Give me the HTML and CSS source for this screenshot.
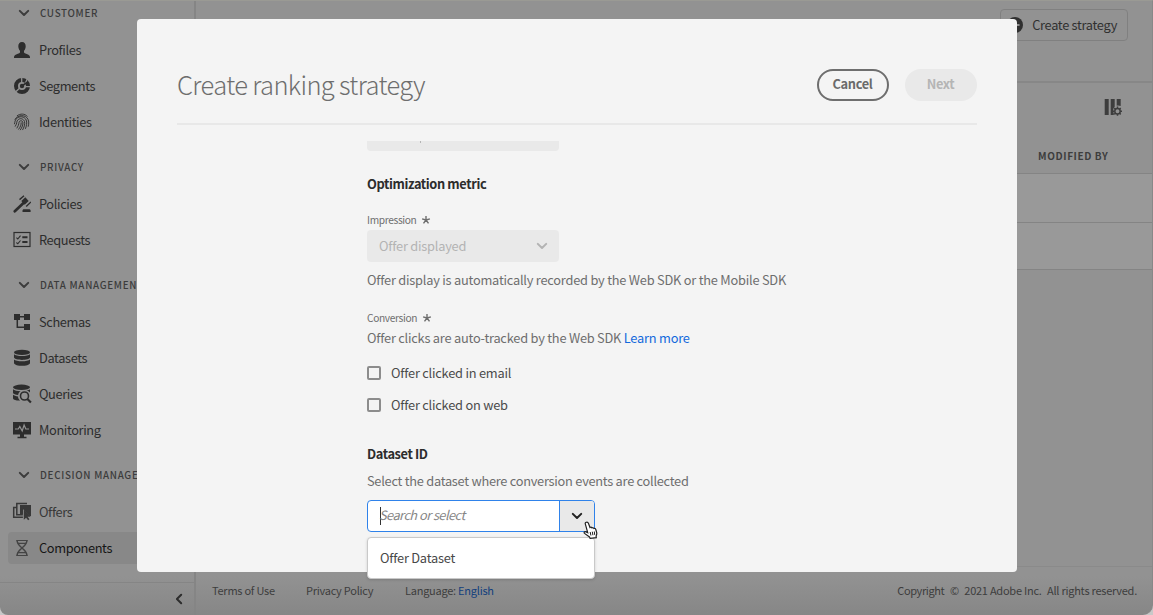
FILE: index.html
```
<!DOCTYPE html>
<html lang="en">
<head>
<meta charset="utf-8">
<title>Create ranking strategy</title>
<link rel="stylesheet" href="styles.css">
</head>
<body>
<svg class="defs" aria-hidden="true">
  <symbol id="chevron" viewBox="0 0 12 8"><path d="M1.8 1.9 6 6l4.2-4.1" fill="none" stroke="currentColor" stroke-width="2" stroke-linecap="round" stroke-linejoin="round"/></symbol>
  <symbol id="star" viewBox="0 0 10 10"><path d="M5 5V.9M5 5l3.9-1.2M5 5l2.5 3.4M5 5 2.5 8.4M5 5 1.1 3.8" fill="none" stroke="currentColor" stroke-width="1.4"/></symbol>
</svg>
<div class="app">
  <aside class="sidebar">
    <nav class="nav">
      <h2 class="group group-first"><svg class="chev"><use href="#chevron"/></svg>CUSTOMER</h2>
      <a class="item"><svg class="icon" viewBox="0 0 18 18"><path d="M9 1C6.500 1 5.300 2.800 5.300 5.300c0 1.900.7 3.500 1.700 4.500v1.400c0 .5-.2.800-.8 1C3.500 13 1 14 1 16v1h16v-1c0-2-2.500-3-5.200-3.800-.6-.2-.8-.5-.8-1V9.800c1-1 1.700-2.600 1.700-4.500C12.700 2.800 11.500 1 9 1z" fill="currentColor"/></svg>Profiles</a>
      <a class="item"><svg class="icon" viewBox="0 0 18 18"><circle cx="9" cy="9" r="6" fill="none" stroke="currentColor" stroke-width="4"/><path d="M8.700 6V0M12 6.800 14.500 1.500M11.500 9.700H18M6.200 11.500 2 15.500" stroke="#929292" stroke-width="1.300"/><circle cx="9" cy="9" r="2.200" fill="currentColor"/><path d="m9 9 5-3.600" stroke="currentColor" stroke-width="1.600"/></svg>Segments</a>
      <a class="item"><svg class="icon" viewBox="0 0 18 18"><g fill="none" stroke="currentColor" stroke-width=".9" stroke-linecap="round"><path d="M4.200 2.700C7.400.300 11.600.500 14.200 3.200M2 6.300C4.800 1.400 12.600 1.300 15 6.300c1 2.300.8 4.800.3 7M1.500 10.800C2 8.800 1.900 7.400 3.400 5.700 6.400 2.600 11.500 3.300 13.200 7c1 2.700.3 6-.7 8.500M2.300 13.300C4.700 9.800 2.800 8.600 5.300 6.500c2.600-1.800 5.400-.4 6.200 2 .7 2.800-.5 6.100-1.800 8.200M4 15c2.600-3.800 1.300-5.200 2.600-6.700 1.100-1 2.700-.6 3.200.8.600 2.300-.9 5.600-2.400 7.700M5.700 16.200c1.700-2.300 2.600-4.400 2.500-6.400"/></g></svg>Identities</a>
      <h2 class="group"><svg class="chev"><use href="#chevron"/></svg>PRIVACY</h2>
      <a class="item"><svg class="icon" viewBox="0 0 18 18"><g fill="none" stroke="currentColor"><path d="M1.800 16.200 10.500 8" stroke-width="2.700" stroke-linecap="round"/><path d="m10 7.800 4-3.600" stroke-width="5"/><path d="M6.500 4.600 11 .700M13.200 11.400 18 6.900" stroke-width="1.400"/></g><path d="M9.500 17v-1.300c0-1 .6-1.500 1.400-1.500h5.300c.8 0 1.400.5 1.400 1.500V17z" fill="currentColor"/></svg>Policies</a>
      <a class="item"><svg class="icon" viewBox="0 0 18 18"><g fill="none" stroke="currentColor"><rect x="1" y="1.500" width="16" height="14" stroke-width="1.200"/><path d="m3.400 6.700 1.400 1.300 2.700-3.300M3.400 11.500l1.400 1.300 2.700-3.300" stroke-width="1.100"/><path d="M9.300 6.200h5.200M9.300 11h5.200" stroke-width="1.900"/></g></svg>Requests</a>
      <h2 class="group"><svg class="chev"><use href="#chevron"/></svg>DATA MANAGEMENT</h2>
      <a class="item"><svg class="icon" viewBox="0 0 18 18"><path d="M1 1h6v6H1zM11 1h6v6h-6zM11 11h6v6h-6z" fill="currentColor"/><path d="M6 3.800h6M4.300 6v8.200H12" fill="none" stroke="currentColor" stroke-width="1.500"/></svg>Schemas</a>
      <a class="item"><svg class="icon" viewBox="0 0 18 18"><g fill="currentColor"><ellipse cx="9" cy="3.400" rx="8" ry="2.700"/><path d="M1 5.200C3 7.600 15 7.600 17 5.200v3.400c-1 3.200-15 3.200-16 0zM1 10.500c2 2.400 14 2.400 16 0v3.700c-1 3.400-15 3.400-16 0z"/></g></svg>Datasets</a>
      <a class="item"><svg class="icon icon-wide" viewBox="0 0 20 20"><g fill="currentColor"><ellipse cx="9.500" cy="3.300" rx="8.500" ry="2.700"/><path d="M1 5.300c1.400 1.400 4.500 1.800 7.500 1.900-1.500 1-2.200 2.200-2.400 3.700C3.500 10.700 1.500 10 1 9zM1 10.800c1 .9 3 1.400 5 1.600.1 1.700.8 3 2.200 4.100C4.800 16.700 1.500 16 1 14.500zM14.500 6.600c1.600-.3 2.800-.7 3.500-1.300v3.300c-1-1.100-2-1.700-3.500-2z"/></g><circle cx="12.500" cy="12" r="4" fill="none" stroke="currentColor" stroke-width="1.600"/><path d="m15.400 15 3.500 3.600" stroke="currentColor" stroke-width="2.200"/></svg>Queries</a>
      <a class="item"><svg class="icon icon-wide" viewBox="0 0 20 20"><path d="M1 2h18v12.500h-7v2.300h2.500v1.400h-9v-1.400H8v-2.300H1z" fill="currentColor"/><path d="M3 9h3.300l1.500-2.500 2.400 4.500L12.100 5l1.700 4H17" fill="none" stroke="#929292" stroke-width="1.200"/></svg>Monitoring</a>
      <h2 class="group"><svg class="chev"><use href="#chevron"/></svg>DECISION MANAGEMENT</h2>
      <a class="item item-dim"><svg class="icon icon-wide" viewBox="0 0 20 20"><path d="M8 3h11v11h-1.500l-6.500-7v5.500H8z" fill="currentColor"/><path d="M11.800 7.200v10.600l2.300-2.100 2 2.600 1.400-1-1.900-2.500h3z" fill="currentColor"/><path d="M15 1.500H4.800v11.200h6M4.500 5.500H1.700v9.700h9.200" fill="none" stroke="currentColor" stroke-width="1.500"/></svg>Offers</a>
      <a class="item item-active"><svg class="icon" viewBox="0 0 18 18"><g fill="none" stroke="currentColor" stroke-width="1.500"><path d="M4 1c0 8 10 8 10 16M14 1c0 8-10 8-10 16"/><path d="M3.600 1.500h10.800M4.800 4.400h8.400M4.800 13.600h8.400M3.600 16.500h10.800" stroke-width="1.100"/></g></svg>Components</a>
    </nav>
    <div class="collapse"><svg class="chev-left" viewBox="0 0 8 12"><path d="M6.200 1.800 1.900 6l4.300 4.200" fill="none" stroke="currentColor" stroke-width="2" stroke-linecap="round" stroke-linejoin="round"/></svg></div>
  </aside>
  <main class="main">
    <header class="topbar">
      <button class="create"><svg class="plus" viewBox="0 0 18 18"><circle cx="9" cy="9" r="8" fill="currentColor"/><path d="M9 4.500v9M4.500 9h9" stroke="#929292" stroke-width="2"/></svg>Create strategy</button>
    </header>
    <div class="tools"><svg class="columns" viewBox="0 0 18 18"><path d="M.700 1h4v16h-4zM6.700 1h4v7.800c-1 1-1.500 2-1.500 3.400 0 1.200.1 2.200.6 3.200V17H6.700zM12.700 1h4v7c-1.200-.7-2.800-.8-4-.3z" fill="currentColor"/><circle cx="13.500" cy="13.200" r="2.700" fill="none" stroke="currentColor" stroke-width="1.500"/><g stroke="currentColor" stroke-width="1.500"><path d="M13.500 8.600v1.700M13.500 16v1.800M8.900 13.200h1.700M16.400 13.200h1.700M10.300 10l1.100 1.100M15.600 15.300l1.100 1.100M16.700 10l-1.100 1.100M11.400 15.300l-1.100 1.100"/></g></svg></div>
    <div class="thead">MODIFIED BY</div>
    <div class="trow trow-tall"></div>
    <div class="trow"></div>
    <footer class="footer">
      <span class="terms">Terms of Use</span><span class="privacy">Privacy Policy</span><span class="lang">Language: <a class="lang-link">English</a></span>
      <span class="copy"><span class="copy-word">Copyright</span><span>©</span><span>2021 Adobe Inc.</span><span>All rights reserved.</span></span>
    </footer>
  </main>
</div>
<section class="modal">
  <header class="modal-head">
    <h1 class="title">Create ranking strategy</h1>
    <button class="btn btn-cancel">Cancel</button>
    <button class="btn btn-next">Next</button>
  </header>
  <div class="form">
    <div class="select-cut"></div>
    <h3 class="section">Optimization metric</h3>
    <label class="label">Impression<svg class="star"><use href="#star"/></svg></label>
    <div class="select">Offer displayed<svg class="chev"><use href="#chevron"/></svg></div>
    <p class="help help-sdk">Offer display is automatically recorded by the Web SDK or the Mobile SDK</p>
    <label class="label label-conversion">Conversion<svg class="star"><use href="#star"/></svg></label>
    <p class="help">Offer clicks are auto-tracked by the Web SDK <a class="link">Learn more</a></p>
    <div class="checks">
      <label class="check"><span class="box"></span>Offer clicked in email</label>
      <label class="check"><span class="box"></span>Offer clicked on web</label>
    </div>
    <h3 class="section section-dataset">Dataset ID</h3>
    <p class="help help-dataset">Select the dataset where conversion events are collected</p>
    <div class="combo">
      <div class="field"><span class="caret"></span><span class="placeholder">Search or select</span></div>
      <div class="toggle"><svg class="chev"><use href="#chevron"/></svg></div>
      <div class="menu">Offer Dataset</div>
      <svg class="pointer" viewBox="0 0 16 18"><path d="M4.300 1.300c1-.4 1.700.1 2.100 1L8 6.500c.8-.5 1.500-.3 2 .4.700-.4 1.500-.2 1.900.6.900-.3 1.600.1 1.900 1l.9 3.200c.3 1.300-.1 2.300-.6 3.400l.2 1.600-6.200.7-.6-1.500-5-3.500c-1-.9.2-2.300 1.600-1.500l1.600.8L3.300 2.900c-.3-.8.200-1.300 1-1.600z" fill="#fff" stroke="#222" stroke-width="1.200"/><path d="m8.200 11 .7 3.500M10.300 10.700l.6 3.500M12.300 10.500l.4 3.400" stroke="#222" stroke-width="1"/></svg>
    </div>
  </div>
</section>
</body>
</html>
```

FILE: styles.css
```
* { box-sizing: border-box; }
body {
  margin: 0;
  position: relative;
  width: 1153px;
  height: 615px;
  overflow: hidden;
  background: #c8c8c8;
  font-family: "Noto Sans CJK SC", "Noto Sans", sans-serif;
  font-size: 12.8px;
  letter-spacing: -0.22px;
  white-space: nowrap;
}
h1, h2, h3, p { margin: 0; }
button { font: inherit; letter-spacing: inherit; }
.defs { position: absolute; width: 0; height: 0; }

.app {
  display: flex;
  height: 615px;
  overflow: hidden;
  border-top: 1px solid #9a9a94;
  border-right: 1px solid #888;
  border-radius: 0 0 10px 8px;
  background: linear-gradient(#929292 0, #929292 575px, #868686 615px);
  color: #2d2d2d;
}

.sidebar {
  display: flex;
  flex-direction: column;
  width: 196px;
  flex: none;
  border-right: 2px solid #858585;
}
.nav { flex: 1; padding-left: 8px; }
.group {
  display: flex;
  align-items: center;
  height: 46px;
  padding: 14px 0 6px 10px;
  font-size: 9.8px;
  font-weight: 500;
  letter-spacing: 0.7px;
  color: #3c3c3c;
}
.group-first { height: 31px; padding-top: 0; padding-bottom: 7px; }
.group .chev { margin-right: 10px; }
.chev { width: 12px; height: 8px; flex: none; }
.item {
  display: flex;
  align-items: center;
  height: 36px;
  padding: 0 0 2px 5px;
  gap: 8px;
  letter-spacing: -0.38px;
}
.icon { width: 18px; height: 18px; flex: none; margin-top: 2px; }
.icon-wide { width: 20px; height: 20px; margin: 2px -1px 0; }
.item-dim { color: #383838; }
.item-active {
  height: 32px;
  margin-top: 2px;
  border-radius: 4px;
  background: #888;
  color: #161616;
}
.item-active .icon { color: #444; }
.collapse {
  display: flex;
  justify-content: flex-end;
  height: 33px;
  padding: 10px 11px 0 0;
  border-top: 1px solid #858585;
}
.chev-left { width: 8px; height: 12px; }

.main { display: flex; flex-direction: column; flex: 1; color: #3d3d3d; }
.topbar {
  display: flex;
  justify-content: flex-end;
  height: 82px;
  padding: 8px 24px 0 0;
  border-bottom: 2px solid #878787;
}
.create {
  display: flex;
  align-items: center;
  gap: 8px;
  height: 32px;
  padding: 0 10px 2px 5px;
  border: 1px solid #808080;
  border-radius: 4px;
  background: none;
  color: #303030;
  letter-spacing: -0.3px;
}
.plus { width: 18px; height: 18px; margin-top: 1px; }
.tools { display: flex; justify-content: flex-end; height: 60px; padding: 15px 30px 0 0; }
.columns { width: 18px; height: 18px; }
.thead {
  display: flex;
  justify-content: flex-end;
  height: 31px;
  padding: 5px 43.500px 0 0;
  border-bottom: 1px solid #848484;
  font-size: 10px;
  font-weight: 700;
  line-height: 16px;
  letter-spacing: 0.6px;
}
.trow { height: 47px; background: #999; border-bottom: 1px solid #848484; }
.trow-tall { height: 49px; }
.footer {
  display: flex;
  height: 49px;
  margin-top: auto;
  padding: 15px 15px 0 16px;
  border-top: 1px solid #8a8a8a;
  font-size: 11px;
  line-height: 16px;
  letter-spacing: -0.25px;
}
.terms { width: 94px; }
.privacy { width: 99px; }
.lang-link { color: #123f7d; }
.copy { display: flex; gap: 5.5px; margin-left: auto; }
.copy-word { letter-spacing: -0.38px; }

.modal {
  position: absolute;
  left: 137px;
  top: 19px;
  width: 880px;
  height: 553px;
  padding: 0 40px;
  border-radius: 4px;
  background: #f4f4f4;
  color: #6e6e6e;
}
.modal-head {
  display: flex;
  align-items: center;
  gap: 16px;
  height: 106px;
  padding-top: 28px;
  border-bottom: 2px solid #e8e8e8;
}
.title {
  flex: 1;
  margin-top: -2px;
  font-size: 25.5px;
  font-weight: 300;
  line-height: 32px;
  letter-spacing: -0.65px;
}
.btn {
  width: 72px;
  height: 32px;
  padding: 0 1px 2px 0;
  border-radius: 16px;
  font-weight: 700;
  line-height: 26px;
  letter-spacing: -0.33px;
}
.btn-cancel { border: 2px solid #6e6e6e; background: none; color: #6a6a6a; }
.btn-next { border: 0; background: #e9e9e9; color: #b5b5b5; }

.form { width: 460px; margin: 16px 0 0 190px; }
.select-cut {
  width: 192px;
  height: 10px;
  border-radius: 0 0 4px 4px;
  background: linear-gradient(#b5b5b5, #b5b5b5) 53px 0 / 1px 2px no-repeat #e9e9e9;
}
.section {
  margin-top: 23px;
  font-size: 12.8px;
  font-weight: 700;
  line-height: 20px;
  letter-spacing: -0.38px;
  color: #2c2c2c;
}
.label {
  display: flex;
  align-items: center;
  gap: 5px;
  height: 16px;
  margin-top: 18px;
  padding-bottom: 2px;
  font-size: 10.2px;
  letter-spacing: -0.35px;
}
.star { width: 10px; height: 10px; margin-top: 1px; }
.select {
  display: flex;
  align-items: center;
  justify-content: space-between;
  width: 192px;
  height: 32px;
  margin-top: 2px;
  padding: 0 11px 2px 12px;
  border-radius: 4px;
  background: #e9e9e9;
  color: #b3b3b3;
}
.select .chev { margin-top: 2px; }
.help { line-height: 20px; }
.help-sdk { margin-top: 8px; }
.label-conversion { margin: 20px 0 2px; }
.link { color: #1369dc; }
.checks { display: grid; grid-auto-rows: 32px; margin-top: 9px; }
.check { display: flex; align-items: center; gap: 10px; padding-bottom: 2px; color: #4b4b4b; }
.box { width: 14px; height: 14px; margin-top: 2px; border: 2px solid #8c8c8c; border-radius: 2px; }
.section-dataset { margin-top: 23px; }
.help-dataset { margin-top: 7px; letter-spacing: -0.26px; }
.combo {
  position: relative;
  display: flex;
  width: 228px;
  height: 32px;
  margin-top: 9px;
  border: 1px solid #2f82ea;
  border-radius: 4px;
  background: #fff;
}
.field {
  display: flex;
  align-items: center;
  flex: 1;
  padding-left: 12px;
  font-style: italic;
  letter-spacing: -0.54px;
  color: #868686;
}
.caret { width: 1px; height: 18px; background: #333; }
.placeholder { margin-left: -2px; padding-bottom: 3px; }
.toggle {
  display: grid;
  place-items: center;
  width: 35px;
  border-left: 1px solid #2f82ea;
  border-radius: 0 3px 3px 0;
  background: #e9e9e9;
  color: #222;
}
.menu {
  position: absolute;
  left: -1px;
  top: 36px;
  width: 228px;
  height: 42px;
  padding-left: 12px;
  border: 1px solid #c9c9c9;
  border-radius: 4px;
  background: #fff;
  box-shadow: 0 1px 3px rgba(0, 0, 0, 0.15);
  line-height: 40px;
  color: #484848;
}
.pointer { position: absolute; left: 214px; top: 20px; width: 16px; height: 18px; }
```
